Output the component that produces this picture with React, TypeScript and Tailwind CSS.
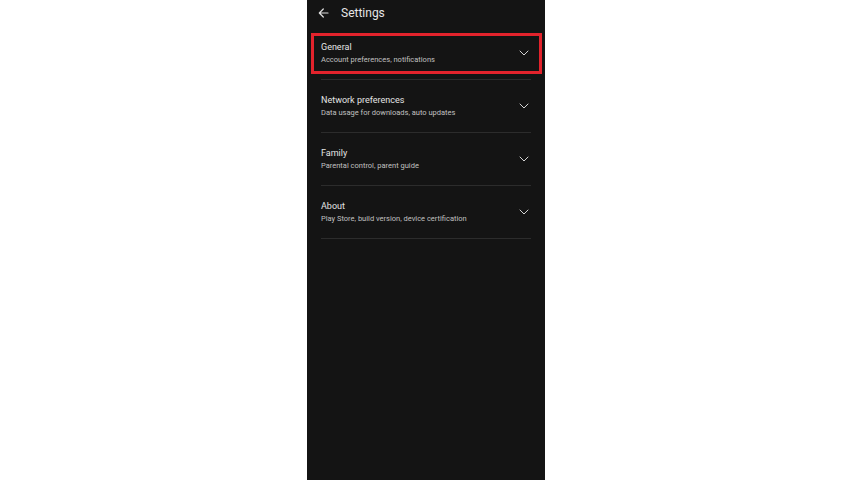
import React from "react";

const items = [
  { title: "General", subtitle: "Account preferences, notifications" },
  { title: "Network preferences", subtitle: "Data usage for downloads, auto updates" },
  { title: "Family", subtitle: "Parental control, parent guide" },
  { title: "About", subtitle: "Play Store, build version, device certification" },
];

function Chevron() {
  return (
    <svg width="10" height="6" viewBox="0 0 10 6" fill="none" className="shrink-0">
      <path d="M1 1l4 4 4-4" stroke="#d4d4d4" strokeWidth="1" strokeLinecap="round" strokeLinejoin="round" />
    </svg>
  );
}

export default function App() {
  return (
    <div className="flex h-[480px] w-full justify-center bg-white" style={{ fontFamily: "Roboto, 'Liberation Sans', sans-serif" }}>
      <div className="relative flex h-full w-[238px] flex-col bg-[#141414]">
        {/* Header */}
        <div className="flex h-[27px] items-center gap-[12px] px-[11px] pb-[1px]">
          <svg width="11" height="10" viewBox="0 0 11 10" fill="none">
            <path d="M10 5H1.5M5.3 1L1.3 5l4 4" stroke="#e0e0e0" strokeWidth="1.2" strokeLinecap="round" strokeLinejoin="round" />
          </svg>
          <span className="text-[12px] leading-none text-[#e6e6e6]">Settings</span>
        </div>

        {/* List */}
        <div className="flex flex-col px-[14px]">
          {items.map((it) => (
            <div key={it.title} className="flex h-[53px] items-center justify-between border-b border-[#2c2c2c] pb-[1px]">
              <div className="flex flex-col gap-[2px] pt-[1px]">
                <span className="text-[9px] leading-[12px] text-[#e4e4e4]">{it.title}</span>
                <span className="text-[7.5px] leading-[10px] text-[#c0c0c0]">{it.subtitle}</span>
              </div>
              <div className="pr-[2px]">
                <Chevron />
              </div>
            </div>
          ))}
        </div>

        {/* Highlight annotation */}
        <div className="absolute left-[4px] top-[33px] h-[41px] w-[231px] border-[3px] border-[#e3232c]" />
      </div>
    </div>
  );
}
